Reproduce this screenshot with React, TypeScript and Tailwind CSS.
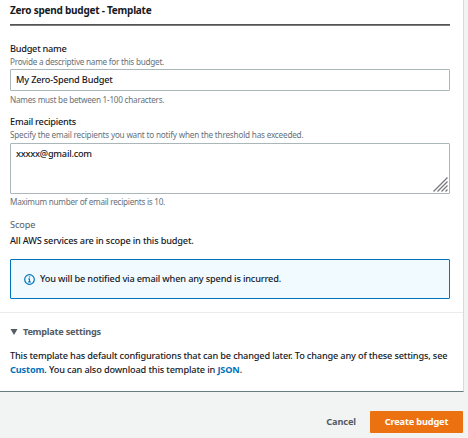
import React from "react";

function Hint({ children, className }: { children: React.ReactNode; className: string }) {
  return <p className={`whitespace-nowrap text-[8.2px] leading-[12px] text-[#687078] ${className}`}>{children}</p>;
}

function InfoIcon() {
  return (
    <svg viewBox="0 0 11 11" className="h-[11px] w-[11px] shrink-0" fill="none" stroke="#0073bb" strokeWidth="1.2">
      <circle cx="5.5" cy="5.5" r="4.8" />
      <path d="M4.8 3h1.4M4.2 5h1.3v3M4 8h3" strokeWidth="1.1" />
    </svg>
  );
}

export default function App() {
  return (
    <div className="h-[438px] w-[468px] overflow-hidden bg-[#f2f3f3] font-['Noto_Sans','Open_Sans',sans-serif] text-[9.2px] leading-[14px] text-[#16191f]">
      <main className="h-[392px] w-[464px] border-r border-b border-r-[#d5dbdb] border-b-[#687f7f] bg-white">
        <section className="h-[313px] border-b border-[#eaeded] pr-[13px] pl-[10px] pt-[3px]">
          <h2 className="h-[21px] whitespace-nowrap text-[10px] font-bold tracking-[-0.24px]">Zero spend budget - Template</h2>
          <div className="h-[2px] border-t border-[#545454] bg-[#7c7c7c]" />
          <label className="mt-[16px] block whitespace-nowrap font-medium tracking-[-0.26px]">Budget name</label>
          <Hint className="tracking-[-0.26px]">Provide a descriptive name for this budget.</Hint>
          <div className="mt-[1px] flex h-[22px] items-center rounded-[1px] border border-[#aab7b8] px-[5px] whitespace-nowrap font-medium tracking-[-0.18px]">My Zero-Spend Budget</div>
          <Hint className="mt-[3px] tracking-[-0.25px]">Names must be between 1-100 characters.</Hint>
          <label className="mt-[9px] block whitespace-nowrap font-medium tracking-[-0.22px]">Email recipients</label>
          <Hint className="tracking-[-0.21px]">Specify the email recipients you want to notify when the threshold has exceeded.</Hint>
          <div className="mt-[2px] flex h-[51px] justify-between rounded-[1px] border border-[#aab7b8] pt-[3px] pr-[1px] pb-[1px] pl-[5px] font-medium tracking-[-0.22px]">
            <span>xxxxx@gmail.com</span>
            <svg viewBox="0 0 15 15" className="h-[15px] w-[15px] self-end" stroke="#77777d" strokeWidth="1.3">
              <path d="M0.5 14.5l14-14M4.5 14.5l10-10M8.5 14.5l6-6M12.5 14.5l2-2" />
            </svg>
          </div>
          <Hint className="mt-[2px] tracking-[-0.28px]">Maximum number of email recipients is 10.</Hint>
          <p className="mt-[10px] tracking-[-0.1px] text-[#545b64]">Scope</p>
          <p className="mt-[2px] whitespace-nowrap font-medium tracking-[-0.17px]">All AWS services are in scope in this budget.</p>
          <div className="mt-[11px] flex h-[40px] items-center gap-[5px] rounded-[1px] border border-[#0073bb] bg-[#f1faff] pl-[13px] whitespace-nowrap font-medium tracking-[-0.16px]">
            <InfoIcon />
            <span>You will be notified via email when any spend is incurred.</span>
          </div>
        </section>
        <section className="pt-[12px] pl-[10px]">
          <h3 className="flex items-center gap-[5px] font-bold tracking-[-0.26px] text-[#545b64]">
            <svg viewBox="0 0 8 6" className="h-[6px] w-[8px]" fill="#545b64"><path d="M0.5 0h7L4 6z" /></svg>
            <span>Template settings</span>
          </h3>
          <p className="mt-[10px] whitespace-nowrap font-medium tracking-[-0.165px]">This template has default configurations that can be changed later. To change any of these settings, see</p>
          <p className="whitespace-nowrap font-medium tracking-[-0.14px]"><a className="font-bold text-[#0073bb]">Custom</a>. You can also download this template in <a className="font-bold text-[#0073bb]">JSON</a>.</p>
        </section>
      </main>
      <footer className="flex w-[463px] items-center justify-end gap-[14px] pt-[19px] font-bold">
        <button className="tracking-[-0.1px] text-[#545b64]">Cancel</button>
        <button className="h-[22px] w-[93px] rounded-[1px] bg-[#ec7211] tracking-[-0.15px] text-white">Create budget</button>
      </footer>
    </div>
  );
}
